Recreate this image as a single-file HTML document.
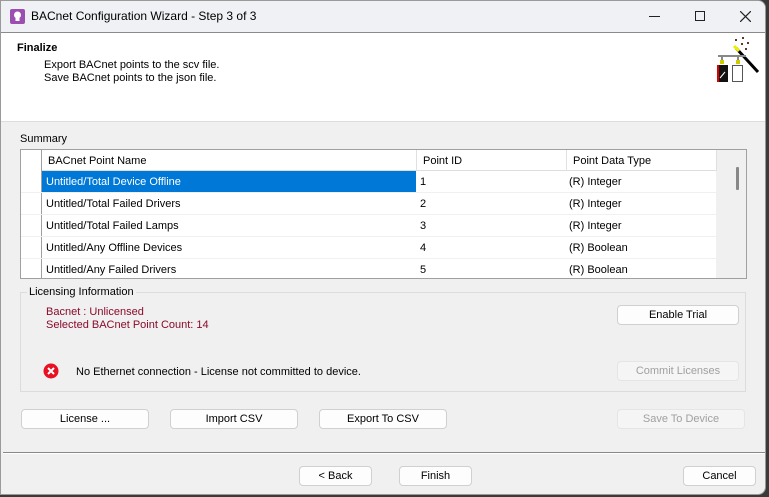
<!DOCTYPE html>
<html><head><meta charset="utf-8"><style>
*{box-sizing:border-box;margin:0;padding:0}
body{width:769px;height:497px;background:#3a3a3a;font-family:"Liberation Sans",sans-serif;font-size:11px;color:#000;position:relative;overflow:hidden}
.win{position:absolute;left:0;top:0;width:766px;height:495px;background:#f0f0f0;border:1px solid #9a9a9a;border-radius:0 8px 8px 0;overflow:hidden}
.a{position:absolute;white-space:nowrap}
.btn{position:absolute;background:#fdfdfd;border:1px solid #d0d0d0;border-radius:4px;text-align:center;line-height:18px;height:20px}
.dis{background:#f5f5f5;border-color:#e5e5e5;color:#a0a0a0}
.row{position:absolute;left:0;width:695px;height:22px;border-bottom:1px solid #f0f0f0}
.row span{position:absolute;top:5px}
</style></head><body>
<div class="win">
<div class="a" style="left:0;top:0;width:766px;height:32px;background:#eff1f4"></div>
<svg class="a" style="left:9px;top:8px" width="15" height="15"><rect width="15" height="15" rx="2" fill="#9b4fb0"/><circle cx="7.5" cy="6" r="3.5" fill="#fff"/><rect x="5.5" y="9" width="4" height="3" fill="#fff"/></svg>
<div class="a" style="left:30px;top:8px;font-size:12px">BACnet Configuration Wizard - Step 3 of 3</div>
<div class="a" style="left:648px;top:15px;width:11px;height:1px;background:#222"></div>
<div class="a" style="left:694px;top:10px;width:10px;height:10px;border:1px solid #222"></div>
<svg class="a" style="left:739px;top:10px" width="11" height="11"><path d="M0 0L11 11M11 0L0 11" stroke="#222" stroke-width="1.2"/></svg>
<div class="a" style="left:0;top:31px;width:766px;height:90px;background:#fff;border-top:1px solid #8a8a8a;border-bottom:1px solid #ddd"></div>
<div class="a" style="left:16px;top:41px;font-weight:bold">Finalize</div>
<div class="a" style="left:43px;top:58px">Export BACnet points to the scv file.</div>
<div class="a" style="left:43px;top:71px">Save BACnet points to the json file.</div>
<svg class="a" style="left:713px;top:34px" width="48" height="52"><path d="M22 13L44 37" stroke="#000" stroke-width="3"/><path d="M20 11L25 16" stroke="#ee0" stroke-width="3"/><g fill="#633"><rect x="21" y="4" width="2" height="2"/><rect x="28" y="2" width="2" height="2"/><rect x="27" y="8" width="2" height="2"/><rect x="33" y="7" width="2" height="2"/><rect x="31" y="13" width="2" height="2"/></g><path d="M4 21H32M8 21V26M24 21V26" stroke="#888" stroke-width="2"/><rect x="6" y="25" width="4" height="4" fill="#cc0"/><rect x="22" y="25" width="4" height="4" fill="#cc0"/><rect x="3" y="30" width="11" height="17" fill="#111"/><rect x="3" y="30" width="2" height="17" fill="#d00"/><path d="M6 43L11 37" stroke="#fff"/><rect x="18.5" y="30.5" width="10" height="16" fill="#fff" stroke="#555"/></svg>
<div class="a" style="left:19px;top:132px">Summary</div>
<div class="a" style="left:19px;top:148px;width:727px;height:130px;border:1px solid #a0a0a0;background:#f0f0f0;overflow:hidden">
 <div class="a" style="left:0;top:0;width:695px;height:128px;background:#fff"></div>
 <div class="a" style="left:0;top:0;width:21px;height:128px;border-right:1px solid #a0a0a0"></div>
 <div class="a" style="left:21px;top:0;width:674px;height:21px;border-bottom:1px solid #ddd"></div>
 <div class="a" style="left:27px;top:5px">BACnet Point Name</div>
 <div class="a" style="left:395px;top:0;height:21px;border-left:1px solid #e0e0e0"></div>
 <div class="a" style="left:402px;top:5px">Point ID</div>
 <div class="a" style="left:545px;top:0;height:21px;border-left:1px solid #e0e0e0"></div>
 <div class="a" style="left:552px;top:5px">Point Data Type</div>
 <div class="a" style="left:695px;top:0;height:21px;border-left:1px solid #e0e0e0"></div>
 <div class="a" style="left:0;top:21px;width:21px;height:22px;border-bottom:1px solid #ddd"></div>
 <div class="a" style="left:0;top:43px;width:21px;height:22px;border-bottom:1px solid #ddd"></div>
 <div class="a" style="left:0;top:65px;width:21px;height:22px;border-bottom:1px solid #ddd"></div>
 <div class="a" style="left:0;top:87px;width:21px;height:22px;border-bottom:1px solid #ddd"></div>
 <div class="a" style="left:21px;top:21px;width:374px;height:22px;background:#0078d7"></div>
 <div class="row" style="top:21px"><span style="left:25px;color:#fff">Untitled/Total Device Offline</span><span style="left:399px">1</span><span style="left:548px">(R) Integer</span></div>
 <div class="row" style="top:43px"><span style="left:25px">Untitled/Total Failed Drivers</span><span style="left:399px">2</span><span style="left:548px">(R) Integer</span></div>
 <div class="row" style="top:65px"><span style="left:25px">Untitled/Total Failed Lamps</span><span style="left:399px">3</span><span style="left:548px">(R) Integer</span></div>
 <div class="row" style="top:87px"><span style="left:25px">Untitled/Any Offline Devices</span><span style="left:399px">4</span><span style="left:548px">(R) Boolean</span></div>
 <div class="row" style="top:109px;border:0"><span style="left:25px">Untitled/Any Failed Drivers</span><span style="left:399px">5</span><span style="left:548px">(R) Boolean</span></div>
 <div class="a" style="left:715px;top:17px;width:3px;height:23px;background:#888;border-radius:1px"></div>
</div>
<div class="a" style="left:19px;top:291px;width:726px;height:100px;border:1px solid #dcdcdc"></div>
<div class="a" style="left:26px;top:285px;background:#f0f0f0;padding:0 2px">Licensing Information</div>
<div class="a" style="left:45px;top:305px;color:#8b0a2a">Bacnet : Unlicensed</div>
<div class="a" style="left:45px;top:318px;color:#8b0a2a">Selected BACnet Point Count: 14</div>
<div class="btn" style="left:616px;top:304px;width:122px">Enable Trial</div>
<svg class="a" style="left:42px;top:362px" width="16" height="16"><circle cx="8" cy="8" r="7.5" fill="#e81123"/><path d="M5 5L11 11M11 5L5 11" stroke="#fff" stroke-width="2"/></svg>
<div class="a" style="left:75px;top:365px">No Ethernet connection - License not committed to device.</div>
<div class="btn dis" style="left:616px;top:360px;width:122px">Commit Licenses</div>
<div class="btn" style="left:20px;top:408px;width:128px">License ...</div>
<div class="btn" style="left:169px;top:408px;width:128px">Import CSV</div>
<div class="btn" style="left:318px;top:408px;width:128px">Export To CSV</div>
<div class="btn dis" style="left:616px;top:408px;width:128px">Save To Device</div>
<div class="a" style="left:2px;top:451px;width:764px;height:2px;border-top:1px solid #888;border-bottom:1px solid #fff"></div>
<div class="btn" style="left:298px;top:465px;width:73px">&lt; Back</div>
<div class="btn" style="left:398px;top:465px;width:73px">Finish</div>
<div class="btn" style="left:682px;top:465px;width:73px">Cancel</div>
</div>
</body></html>
